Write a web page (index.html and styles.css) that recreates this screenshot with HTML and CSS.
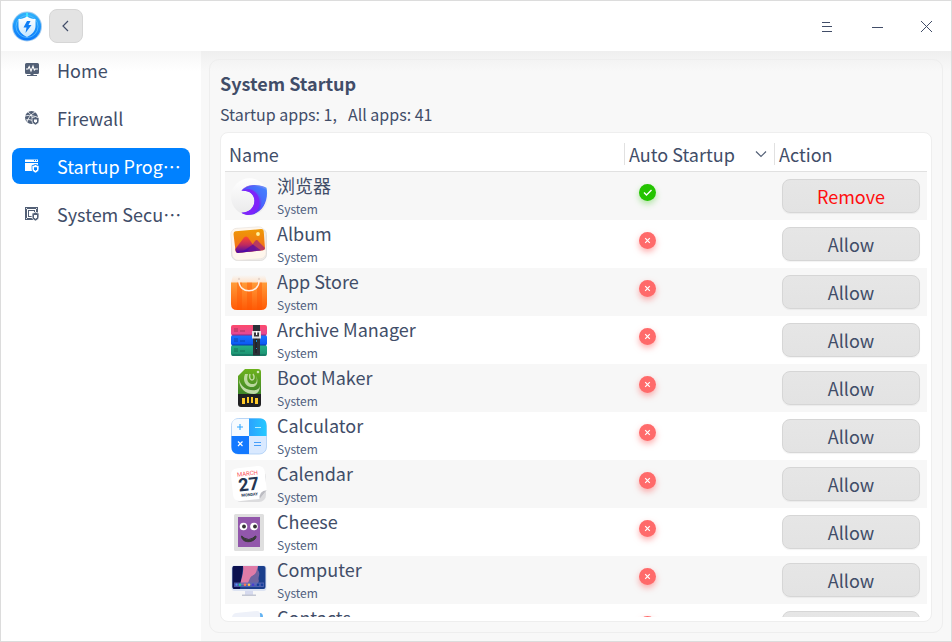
FILE: index.html
```html
<!DOCTYPE html>
<html lang="en">
<head>
<meta charset="utf-8">
<title>System Startup</title>
<link rel="stylesheet" href="styles.css">
</head>
<body>
<div class="window">
  <header class="titlebar">
    <svg class="logo" viewBox="0 0 32 32" aria-hidden="true">
      <defs>
        <linearGradient id="lg" x1="0" y1="0" x2="0" y2="1"><stop offset="0" stop-color="#2fb2fb"/><stop offset="1" stop-color="#0a78fb"/></linearGradient>
        <linearGradient id="lgs" x1="0" y1="0" x2="0" y2="1"><stop offset="0" stop-color="#ffffff"/><stop offset="1" stop-color="#c4e6ff"/></linearGradient>
      </defs>
      <circle cx="16" cy="16.500" r="15" fill="#a5cdf0"/>
      <circle cx="16" cy="16.500" r="14" fill="url(#lg)"/>
      <circle cx="16" cy="16.500" r="11" fill="none" stroke="#62c4ff" stroke-width="1" opacity=".7"/>
      <path d="M16 3v4" stroke="#3fe3ff" stroke-width="2"/>
      <path d="M16 6.500c3 2 6 2.500 8.500 2.500v7c0 5-3.500 8.500-8.500 11-5-2.500-8.500-6-8.500-11V9c2.500 0 5.500-.5 8.500-2.500z" fill="url(#lgs)"/>
      <path d="M16 11h3.500l-2 4h3l-6 8 1-5.500h-3z" fill="#0b7df6"/>
    </svg>
    <button class="back" type="button" aria-label="Back">
      <svg viewBox="0 0 12 12"><path d="M8 1 3 6l5 5" fill="none" stroke="#414d68" stroke-width="1.200"/></svg>
    </button>
    <div class="window-controls">
      <button type="button" aria-label="Menu"><svg viewBox="0 0 12 12" shape-rendering="crispEdges"><path d="M1 2h8v1H1zM1 6h10v1H1zM1 11h10v1H1z" fill="#414d68"/></svg></button>
      <button type="button" aria-label="Minimize"><svg viewBox="0 0 12 12" shape-rendering="crispEdges"><path d="M1 7h11v1H1z" fill="#414d68"/></svg></button>
      <button type="button" aria-label="Close"><svg viewBox="0 0 12 12"><path d="m0 1 11 11M11 1 0 12" stroke="#414d68"/></svg></button>
    </div>
  </header>
  <div class="body">
    <nav class="sidebar">
      <a class="nav-item" href="#home">
        <svg viewBox="0 0 14 14"><path d="M1.500 0h11A1.500 1.500 0 0 1 14 1.500V9.500a1.500 1.500 0 0 1-1.500 1.500h-11A1.500 1.500 0 0 1 0 9.500V1.500A1.500 1.500 0 0 1 1.500 0z" fill="#536076"/><path d="M1 6h2l1.200-2.500L6 8l2-5 1.300 4 1-1H13" fill="none" stroke="#fff" stroke-width="1.100"/><path d="M5.500 11h3v1H12v1H2v-1h3.500z" fill="#536076"/></svg>
        <span>Home</span>
      </a>
      <a class="nav-item" href="#firewall">
        <svg viewBox="0 0 14 14"><circle cx="6.500" cy="6.500" r="6.500" fill="#536076"/><path d="M0 5c4-1 8-1 13 2M3 1c4 3 5 6 5 12M10 1C6 3 3 7 2 11M1 9c3-1 5 0 7 1" fill="none" stroke="#fff" stroke-width=".8"/><path d="M10.500 5.500c1 .8 2 1 3.500 1v3.500c0 2-1.500 3-3.500 4-2-1-3.500-2-3.500-4V6.500c1.500 0 2.500-.2 3.500-1z" fill="#536076" stroke="#fff" stroke-width=".7"/><path d="M9 8.500h3v2L10.500 12 9 10.500z" fill="#fff"/></svg>
        <span>Firewall</span>
      </a>
      <a class="nav-item active" href="#startup" aria-current="page">
        <svg viewBox="0 0 14 14"><path d="M0 .500h13V3H0zM0 4h13v2L10.500 5 7 6.500V12H0z" fill="#fff"/><path d="M9 1.500h1M11 1.500h1" stroke="#0081ff"/><path d="M10.500 5.500c1 .8 2 1 3.500 1V10c0 2-1.500 3-3.500 4-2-1-3.500-2-3.500-4V6.500c1.500 0 2.500-.2 3.500-1z" fill="#fff" stroke="#0081ff" stroke-width=".7"/><path d="M9 8.300h3v2L10.500 12 9 10.300z" fill="#0081ff"/></svg>
        <span>Startup Programs</span>
      </a>
      <a class="nav-item" href="#security">
        <svg viewBox="0 0 14 14"><path d="M0 0h13v13H0z" fill="#536076"/><path d="M2 2h9v9H2z" fill="#fff"/><path d="M3 3h7v7H3z" fill="#536076"/><path d="M4 4h5v5H4z" fill="#fff"/><path d="m1 1 2 2M12 1l-2 2M1 12l2-2" stroke="#fff" stroke-width=".8"/><path d="M10.500 5c1 .8 2 1 3.500 1v4c0 2-1.500 3-3.500 4-2-1-3.500-2-3.500-4V6c1.500 0 2.500-.2 3.500-1z" fill="#536076" stroke="#fff" stroke-width=".8"/><path d="M9 8h3v2.300L10.500 12 9 10.300z" fill="#fff"/></svg>
        <span>System Security</span>
      </a>
    </nav>
    <main class="content">
      <section class="panel">
        <h1>System Startup</h1>
        <p class="summary"><span>Startup apps: 1,</span><span>All apps: 41</span></p>
        <div class="card">
          <div class="list">
          <table>
            <thead>
              <tr><th class="col-name">Name</th>
              <th class="col-auto"><div class="head">Auto Startup<svg viewBox="0 0 12 8"><path d="m1 1.500 5 5 5-5" fill="none" stroke="#536076" stroke-width="1.200"/></svg></div></th>
              <th class="col-action"><div class="head">Action</div></th></tr>
            </thead>
            <tbody>
              <tr>
                <td><div class="app">
                  <svg viewBox="0 0 36 36"><defs><linearGradient id="b1" x1="0" y1="1" x2="1" y2="0"><stop offset="0" stop-color="#6a22ff"/><stop offset=".5" stop-color="#5b3df5"/><stop offset="1" stop-color="#53a5fb"/></linearGradient><linearGradient id="b2" x1="0" y1="0" x2="0" y2="1"><stop offset="0" stop-color="#fff"/><stop offset="1" stop-color="#e9e9ea"/></linearGradient></defs><g transform="translate(.5 .8)"><circle cx="18" cy="18" r="18.500" fill="url(#b2)"/><path d="M10 12C15 5 27 5 35 9c3 14-6 27-17 27-3 0-6-.5-8-2 7 0 13-4 13-12 0-7-6-11-13-10z" fill="url(#b1)"/><path d="M10 12c7-7 17-7 24-2-2-3-13-5-19-2-2 1-4 2-5 4z" fill="#ad70ee"/><path d="M10 12c9-5 18 2 18 11 0 6-3 10-7 12-4 2-8 1-11-1 7 0 13-5 13-12S17 11 10 12z" fill="#7e24fa"/><path d="M12 11c10-3 17 3 18 11 0 4-1 8-3 10 6-4 8-11 8-21-6-3-17-5-23 0z" fill="#3e75ff" opacity=".65"/></g></svg>
                  <div><div class="app-name">浏览器</div><div class="app-kind">System</div></div></div></td>
                <td><svg class="status on" viewBox="0 0 17 17" role="img" aria-label="Enabled"><circle cx="8.500" cy="8.500" r="8.500" fill="#24c400"/><path d="m5 8.500 2.500 2.500 5-5" fill="none" stroke="#fff" stroke-width="1.400"/></svg></td>
                <td><button class="action remove" type="button">Remove</button></td>
              </tr>
              <tr>
                <td><div class="app">
                  <svg viewBox="0 0 36 36"><defs><linearGradient id="a1" x1="0" y1="0" x2="0" y2="1"><stop offset="0" stop-color="#ee9a06"/><stop offset="1" stop-color="#f5651e"/></linearGradient><linearGradient id="a2" x1="0" y1="0" x2="0" y2="1"><stop offset="0" stop-color="#ff4a2d"/><stop offset=".5" stop-color="#c02a5e"/><stop offset="1" stop-color="#4507ae"/></linearGradient></defs><rect x=".500" y="2.500" width="35" height="32" rx="6" fill="#efecea" stroke="#dcdad8" stroke-width=".8"/><rect x=".500" y="1.500" width="34" height="32" rx="6" fill="#fff6ec" stroke="#e6e2df" stroke-width=".6" transform="rotate(-4 18 18)"/><path d="M2.500 8q0-2.500 2-2.700L30 3q2.500-.2 2.700 2L34 22q0 2-2 2.300L7 27q-2.300 0-2.500-2z" fill="url(#a1)"/><path d="M4.300 23 13 11.500q2-2 4 0L26 24.500 7 27q-2.300 0-2.700-4z" fill="url(#a2)"/><path d="m16 26 8-11q2-2 3 0l7 7q0 2-2 2.300z" fill="#a92a73" opacity=".8"/><path d="m10 26.500 12-8 8 6z" fill="#4507ae" opacity=".6"/><circle cx="27" cy="8" r="1.900" fill="#fff3a0"/></svg>
                  <div><div class="app-name">Album</div><div class="app-kind">System</div></div></div></td>
                <td><svg class="status" viewBox="0 0 17 17" role="img" aria-label="Disabled"><use href="#off"/></svg></td>
                <td><button class="action" type="button">Allow</button></td>
              </tr>
              <tr>
                <td><div class="app">
                  <svg viewBox="0 0 36 36"><defs><linearGradient id="s1" x1="0" y1="0" x2="0" y2="1"><stop offset="0" stop-color="#ff9c39"/><stop offset="1" stop-color="#ff5a06"/></linearGradient><linearGradient id="s2" x1="0" y1="0" x2="0" y2="1"><stop offset="0" stop-color="#f7f7f7"/><stop offset="1" stop-color="#ffe0c5"/></linearGradient></defs><path d="M2 1h32l2 8H0z" fill="url(#s2)"/><path d="M0 8.500h36V30q0 6-6 6H6q-6 0-6-6z" fill="url(#s1)"/><path d="M6 8.500h5V36H6zM16 8.500h5V36h-5zM26 8.500h5V36h-5z" fill="#ff5300" opacity=".4"/><path d="M8 5v2c0 13 20 13 20 0V5" fill="none" stroke="#fff0e5" stroke-width="1.500"/><circle cx="8" cy="5" r="1.200" fill="#e7d4c9"/><circle cx="28" cy="5" r="1.200" fill="#e7d4c9"/></svg>
                  <div><div class="app-name">App Store</div><div class="app-kind">System</div></div></div></td>
                <td><svg class="status" viewBox="0 0 17 17" role="img" aria-label="Disabled"><use href="#off"/></svg></td>
                <td><button class="action" type="button">Allow</button></td>
              </tr>
              <tr>
                <td><div class="app">
                  <svg viewBox="0 0 36 36"><defs><linearGradient id="r1" x1="0" y1="0" x2="0" y2="1"><stop offset="0" stop-color="#fd4a6c"/><stop offset="1" stop-color="#e0489b"/></linearGradient><linearGradient id="r2" x1="0" y1="0" x2="0" y2="1"><stop offset="0" stop-color="#1b74ff"/><stop offset="1" stop-color="#0a55f2"/></linearGradient><linearGradient id="r3" x1="0" y1="0" x2="0" y2="1"><stop offset="0" stop-color="#24b089"/><stop offset="1" stop-color="#1c8f6e"/></linearGradient></defs><rect y="3" width="36" height="10.500" rx="2" fill="url(#r1)"/><rect y="13" width="36" height="10.500" rx="2" fill="url(#r2)"/><rect y="23" width="36" height="11" rx="2" fill="url(#r3)"/><path d="M1 12.500h34v1H1z" fill="#8d2a80"/><path d="M1 22.500h34v1H1z" fill="#0b3aa8"/><path d="M1 32.500h34v1H1z" fill="#13695e"/><path d="M3 6h4v4H3zM9 8h5v2H9zM3 16h4v4H3zM9 18h5v2H9zM3 26h4v4H3zM9 28h5v2H9z" fill="#000" opacity=".15"/><path d="M22 3h7v30.500h-7z" fill="#2c3038"/><path d="M25 16v15" stroke="#15181f"/><path d="M21 9h9v7.500h-9z" fill="#e4e4e4"/><path d="M23 10.500h5v4h-5z" fill="#34343a"/><path d="M25 9h1.200v4H25z" fill="#fff"/><path d="M25 18h1v2h-1zM25 26h1v1h-1z" fill="#1d90d0"/></svg>
                  <div><div class="app-name">Archive Manager</div><div class="app-kind">System</div></div></div></td>
                <td><svg class="status" viewBox="0 0 17 17" role="img" aria-label="Disabled"><use href="#off"/></svg></td>
                <td><button class="action" type="button">Allow</button></td>
              </tr>
              <tr>
                <td><div class="app">
                  <svg viewBox="0 0 36 36"><defs><linearGradient id="m1" x1="0" y1="0" x2="0" y2="1"><stop offset="0" stop-color="#6db21d"/><stop offset="1" stop-color="#3c8229"/></linearGradient></defs><path d="M14-1h13q3 0 3 3v23H7V6z" fill="url(#m1)"/><path d="M7 24h23v10q0 3-3 3H10q-3 0-3-3z" fill="#202022"/><path d="M8 9c2 9 9 12 17 11 3-1 4-3 4-5 0 5-2 9-6 9C14 24 8 18 8 9z" fill="#d5e7bd" opacity=".85"/><path d="M14 4c-3 7 1 13 7 13 5 0 7-6 4-11 2 5 0 8-3 8-5 0-7-4-5-10-1 0-2 0-3 0z" fill="#d5e7bd" opacity=".8"/><path d="M19 4c-1 3 0 6 2 6s3-3 1-6" fill="none" stroke="#d5e7bd" stroke-width="1.500" opacity=".8"/><path d="M11 28h3v6h-3zM16 27h2v6h-2zM20 27h2v6h-2zM24 28h3v6h-3z" fill="#ffc928"/><circle cx="27" cy="2" r="1.300" fill="#d4e8bf"/></svg>
                  <div><div class="app-name">Boot Maker</div><div class="app-kind">System</div></div></div></td>
                <td><svg class="status" viewBox="0 0 17 17" role="img" aria-label="Disabled"><use href="#off"/></svg></td>
                <td><button class="action" type="button">Allow</button></td>
              </tr>
              <tr>
                <td><div class="app">
                  <svg viewBox="0 0 36 36"><defs><linearGradient id="c1" x1="0" y1="0" x2="1" y2="0"><stop offset="0" stop-color="#2ba2ff"/><stop offset="1" stop-color="#25c9ff"/></linearGradient></defs><rect x=".500" y=".500" width="35" height="35.500" rx="7" fill="#d9e9ff" stroke="#a9cdf5" stroke-width=".8"/><path d="M7 1h11v17H1V7q0-6 6-6z" fill="#f6fbff"/><path d="M18 .500h11q6.500 0 6.500 7V18H18z" fill="url(#c1)"/><path d="M.500 18H18v18H7q-6.500 0-6.500-7z" fill="#1379ff"/><path d="M6 9h6M9 6v6" stroke="#32a8ff" stroke-width="1.100"/><path d="M24 9.500h6" stroke="#b4edff"/><path d="m7 23.500 4.500 4.500M11.500 23.500 7 28" stroke="#fff" stroke-width="1.200"/><path d="M23 24.500h7M23 27.500h7" stroke="#469ef9"/></svg>
                  <div><div class="app-name">Calculator</div><div class="app-kind">System</div></div></div></td>
                <td><svg class="status" viewBox="0 0 17 17" role="img" aria-label="Disabled"><use href="#off"/></svg></td>
                <td><button class="action" type="button">Allow</button></td>
              </tr>
              <tr>
                <td><div class="app">
                  <svg viewBox="0 0 36 36"><rect x="3" y="4" width="32" height="32" rx="7" fill="#dcdcde"/><g transform="rotate(-6 18 18)"><path d="M8 1h20q7 0 7 7v18l-8 8H8q-7 0-7-7V8q0-7 7-7z" fill="#fff"/><path d="M27 34q0-8 8-8z" fill="#bcbcc2"/><text class="icon-text" x="17.500" y="9.500" font-size="6" fill="#fb5862">MARCH</text><text class="icon-text icon-day" x="17.500" y="24.500" font-size="18" fill="#253653">27</text><text class="icon-text icon-day" x="17.500" y="30" font-size="4" fill="#253653">MONDAY</text></g></svg>
                  <div><div class="app-name">Calendar</div><div class="app-kind">System</div></div></div></td>
                <td><svg class="status" viewBox="0 0 17 17" role="img" aria-label="Disabled"><use href="#off"/></svg></td>
                <td><button class="action" type="button">Allow</button></td>
              </tr>
              <tr>
                <td><div class="app">
                  <svg viewBox="0 0 36 36"><rect x="3" width="30" height="37" rx="1.500" fill="#dfdfdf"/><path d="M7 3h22v30H7z" fill="#9257ab"/><circle cx="12.500" cy="12.500" r="3.800" fill="#fff"/><circle cx="23" cy="12.500" r="3.800" fill="#fff"/><circle cx="13" cy="12.500" r="1.900" fill="#333"/><circle cx="24" cy="12.500" r="1.900" fill="#333"/><path d="M10.500 22q1 0 2.500 2 5 3 9 0 1.500-2 3-2c1 6-14 9-14.500 0z" fill="#393939" stroke="#393939"/></svg>
                  <div><div class="app-name">Cheese</div><div class="app-kind">System</div></div></div></td>
                <td><svg class="status" viewBox="0 0 17 17" role="img" aria-label="Disabled"><use href="#off"/></svg></td>
                <td><button class="action" type="button">Allow</button></td>
              </tr>
              <tr>
                <td><div class="app">
                  <svg viewBox="0 0 36 36"><path d="M14 28h8v5h-8z" fill="#d6daee"/><path d="M11 32.500h14V34H11z" fill="#c3c7d3"/><rect x=".500" y="3.500" width="35" height="25.500" rx="3" fill="#dce3f2"/><rect x="1.500" y="4" width="33" height="23" rx="2" fill="#1b3f8c"/><path d="M3 4h9L9 27H3q-1.500 0-1.500-2V6q0-2 1.500-2z" fill="#0c1150"/><path d="M12 4h15c-1 5 0 7-5 10-4 2-1 6-5 9H9c1-6 4-12 3-19z" fill="#df7ba7"/><path d="M26 7c5 5 0 8 2 12l-2 4H16c2-3 2-7 5-9s4-2 5-7z" fill="#7064a0"/><path d="M3 20.500h30v4.500H3z" fill="#5a69b8" opacity=".8"/><circle cx="5.500" cy="22.700" r="1.100" fill="#5590ff"/><circle cx="9" cy="22.700" r="1.300" fill="#22ce92"/><circle cx="14" cy="22.700" r="1.300" fill="#ff794f"/><circle cx="18" cy="22.700" r="1.300" fill="#ffc24d"/><circle cx="22" cy="22.700" r="1.300" fill="#493dd3"/><circle cx="27" cy="22.700" r="1.300" fill="#153e9b"/><circle cx="31" cy="22.700" r="1.300" fill="#153e9b"/></svg>
                  <div><div class="app-name">Computer</div><div class="app-kind">System</div></div></div></td>
                <td><svg class="status" viewBox="0 0 17 17" role="img" aria-label="Disabled"><use href="#off"/></svg></td>
                <td><button class="action" type="button">Allow</button></td>
              </tr>
              <tr>
                <td><div class="app">
                  <svg viewBox="0 0 36 36"><path d="M24 3h5q3 0 3 4v26H20z" fill="#63b3f2"/><path d="M1 8q0-4 4-5L26 1q3 0 3 3l2 30H1z" fill="#eef1f9"/></svg>
                  <div><div class="app-name">Contacts</div><div class="app-kind">System</div></div></div></td>
                <td><svg class="status" viewBox="0 0 17 17" role="img" aria-label="Disabled"><g id="off"><circle cx="8.500" cy="8.500" r="8.500" fill="#ff6a6a"/><path d="m6.200 6.200 4.600 4.600M10.800 6.200l-4.600 4.600" stroke="#fff" stroke-width="1.200"/></g></svg></td>
                <td><button class="action" type="button">Allow</button></td>
              </tr>
            </tbody>
          </table>
          </div>
        </div>
      </section>
    </main>
  </div>
</div>
</body>
</html>
```
FILE: styles.css
```css
* { box-sizing: border-box; }

body {
  margin: 0;
  font-family: "Noto Sans CJK SC", "Noto Sans", sans-serif;
  font-size: 18px;
  line-height: 24px;
  color: #414d68;
}

svg { display: block; flex: none; }
button { font: inherit; color: inherit; padding: 0; }

.window {
  display: flex;
  flex-direction: column;
  height: 100vh;
  border: 1px solid #dcdcdc;
  background: #fff;
}

.titlebar {
  display: flex;
  align-items: center;
  gap: 6px;
  height: 50px;
  flex: none;
  padding: 0 18px 0 10px;
}
.logo { width: 32px; height: 32px; }

.back {
  display: grid;
  place-items: center;
  width: 34px;
  height: 34px;
  border: 1px solid #d6d6d6;
  border-radius: 8px;
  background: #e3e3e3;
}
.back svg { width: 12px; height: 12px; }

.window-controls { display: flex; gap: 38px; margin-left: auto; }
.window-controls button { border: 0; background: none; }
.window-controls svg { width: 12px; height: 12px; overflow: visible; }

.body {
  display: flex;
  flex: 1;
  min-height: 0;
  background: linear-gradient(#f6f6f6, #fff 20px);
}

.sidebar {
  display: flex;
  flex-direction: column;
  gap: 12px;
  width: 200px;
  flex: none;
  padding: 1px 11px;
}
.nav-item {
  display: flex;
  align-items: center;
  gap: 18px;
  height: 36px;
  padding: 0 8px 0 13px;
  border-radius: 8px;
  color: inherit;
  text-decoration: none;
}
.nav-item svg { width: 14px; height: 14px; }
.nav-item span {
  flex: 1;
  min-width: 0;
  overflow: hidden;
  text-overflow: ellipsis;
  white-space: nowrap;
}
.nav-item.active { background: #0081ff; color: #fff; }

.content {
  display: flex;
  flex: 1;
  min-width: 0;
  padding: 8px;
  background: linear-gradient(#efefef, #f8f8f8 20px);
}
.panel {
  display: flex;
  flex-direction: column;
  flex: 1;
  min-width: 0;
  padding: 11px 10px 10px;
  border: 1px solid #eee;
  border-radius: 10px;
}
h1 { margin: 0; font-size: 18px; line-height: 24px; font-weight: 700; }
.summary {
  display: flex;
  gap: 11px;
  margin: 7px 0 6px;
  font-size: 16px;
  line-height: 24px;
}

.card {
  flex: 1;
  min-height: 0;
  padding: 4px;
  border: 1px solid #eee;
  border-radius: 8px;
  background: #fff;
}
.list { height: 100%; overflow: hidden; }

table { width: 100%; table-layout: fixed; border-collapse: separate; border-spacing: 0; }
th {
  height: 35px;
  padding: 0 4px;
  border-bottom: 1px solid #e1e1e1;
  font-weight: 400;
  text-align: left;
}
.col-auto { width: 150px; padding-left: 0; }
.col-action { width: 153px; padding-left: 0; }
.head {
  display: flex;
  align-items: center;
  justify-content: space-between;
  height: 22px;
  padding: 0 3px 0 4px;
  border-left: 1px solid #e1e1e1;
}
.head svg { width: 12px; height: 8px; }

td { height: 48px; padding: 0; }
tbody tr:nth-child(odd) { background: #f7f7f7; }

.app { display: flex; align-items: center; gap: 10px; padding-left: 6px; }
.app svg { width: 36px; height: 36px; overflow: visible; }
.app-name { line-height: 26px; }
.app-kind { font-size: 12px; line-height: 22px; color: #4f5f7e; }

.status {
  width: 17px;
  height: 17px;
  margin: 0 0 8px 15px;
  overflow: visible;
  filter: drop-shadow(0 3px 3px rgba(255, 90, 90, .5));
}
.status.on { filter: drop-shadow(0 3px 3px rgba(36, 196, 0, .35)); }

.action {
  display: block;
  width: 138px;
  height: 34px;
  margin-left: 8px;
  border: 1px solid #d6d6d6;
  border-radius: 8px;
  background: linear-gradient(#e6e6e6, #e3e3e3);
  box-shadow: 0 1px 1px rgba(0, 0, 0, .05);
}
.remove { color: #ff0f0f; }

.icon-text { text-anchor: middle; font-family: Roboto, sans-serif; }
.icon-day { font-weight: 700; }
```
